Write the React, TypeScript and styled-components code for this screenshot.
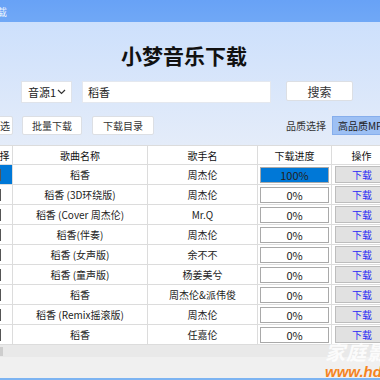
import { useEffect, useRef } from 'react';
import styled, { createGlobalStyle, css } from 'styled-components';

interface SongTypes {
  id: number;
  name: string;
  singer: string;
  progress: number;
}

const songs: SongTypes[] = [
  { id: 1, name: '稻香', singer: '周杰伦', progress: 100 },
  { id: 2, name: '稻香 (3D环绕版)', singer: '周杰伦', progress: 0 },
  { id: 3, name: '稻香 (Cover 周杰伦)', singer: 'Mr.Q', progress: 0 },
  { id: 4, name: '稻香(伴奏)', singer: '周杰伦', progress: 0 },
  { id: 5, name: '稻香 (女声版)', singer: '余不不', progress: 0 },
  { id: 6, name: '稻香 (童声版)', singer: '杨姜美兮', progress: 0 },
  { id: 7, name: '稻香', singer: '周杰伦&派伟俊', progress: 0 },
  { id: 8, name: '稻香 (Remix摇滚版)', singer: '周杰伦', progress: 0 },
  { id: 9, name: '稻香', singer: '任嘉伦', progress: 0 },
];

const GlobalStyle = createGlobalStyle`
  html, body {
    margin: 0;
    padding: 0;
  }
  body {
    width: 380px;
    height: 380px;
    overflow: hidden;
    background: #f0f0f0;
    color: #222;
    font-family: 'Noto Sans CJK SC', 'Noto Sans', sans-serif;
    font-size: 10px;
  }
`;

const Window = styled.div`
  position: relative;
  display: flex;
  flex-direction: column;
  width: 380px;
  height: 380px;
  overflow: hidden;
`;
const TitleBar = styled.div`
  display: flex;
  align-items: center;
  flex-shrink: 0;
  height: 22px;
  background: linear-gradient(#68a2f6, #70a8f6);
  color: #fff;
  font-size: 10px;
  overflow: hidden;
`;
const TitleBarText = styled.span`
  margin-left: -3px;
  opacity: 0.85;
`;
const Body = styled.div`
  display: flex;
  flex-direction: column;
  flex-shrink: 0;
  height: 123px;
  background: linear-gradient(#cde0fc, #e4ecf9);
  overflow: hidden;
`;
const Heading = styled.h1`
  margin: 21px 0 0;
  padding-right: 12px;
  height: 24px;
  line-height: 24px;
  text-align: center;
  font-size: 21px;
  font-weight: 700;
  color: #111;
`;
const SearchRow = styled.div`
  display: flex;
  align-items: flex-start;
  margin-top: 14px;
  padding-left: 21px;
  height: 22px;
`;
const SourceSelect = styled.div`
  display: flex;
  align-items: center;
  justify-content: space-between;
  box-sizing: border-box;
  width: 51px;
  height: 22px;
  padding: 0 5px 0 6px;
  background: #fff;
  border: 1px solid #dfe3ea;
  font-size: 11px;
  color: #222;
  white-space: nowrap;
`;
const SearchInput = styled.div`
  display: flex;
  align-items: center;
  box-sizing: border-box;
  width: 189px;
  height: 22px;
  margin-left: 10px;
  padding-left: 5px;
  background: #fff;
  border: 1px solid #e4e8ef;
  font-size: 11px;
  color: #222;
`;
const Button = styled.div<{ $width: number; $height?: number; $size?: number }>`
  display: flex;
  align-items: center;
  justify-content: center;
  flex-shrink: 0;
  box-sizing: border-box;
  width: ${({ $width }) => $width}px;
  height: ${({ $height }) => $height ?? 19}px;
  background: #fff;
  border: 1px solid #dcdfe4;
  border-radius: 2px;
  font-size: ${({ $size }) => $size ?? 10}px;
  color: #333;
  white-space: nowrap;
`;
const SearchButton = styled(Button)`
  margin-left: 15px;
`;
const ToolRow = styled.div`
  display: flex;
  align-items: center;
  gap: 9px;
  width: 402px;
  height: 19px;
  margin-top: 13px;
`;
const CroppedButton = styled(Button)`
  margin-left: -47px;
  justify-content: flex-end;
  padding-right: 2px;
`;
const DirButton = styled(Button)`
  margin-left: 1px;
`;
const QualityLabel = styled.span`
  margin-left: auto;
  font-size: 10px;
  color: #333;
`;
const QualitySelect = styled.div`
  display: flex;
  align-items: center;
  box-sizing: border-box;
  width: 70px;
  height: 19px;
  margin-left: -3px;
  padding-left: 5px;
  background: #9dc0f4;
  border: 1px solid #86aeec;
  font-size: 10px;
  color: #222;
  white-space: nowrap;
`;
const TableViewport = styled.div`
  flex-shrink: 0;
  height: 200px;
  background: #fff;
  overflow: hidden;
`;
const Grid = styled.div`
  display: grid;
  grid-template-columns: 26px 135px 110px 74px 60px;
  width: 405px;
`;
const Cell = styled.div<{ $header?: boolean; $selected?: boolean }>`
  display: flex;
  align-items: center;
  justify-content: center;
  box-sizing: border-box;
  height: 20px;
  border-right: 1px solid #dcdcdc;
  border-bottom: 1px solid #dcdcdc;
  font-size: 10px;
  color: #222;
  white-space: nowrap;
  overflow: hidden;
  ${({ $header }) =>
    $header &&
    css`
      border-top: 1px solid #dcdcdc;
      color: #111;
    `}
  ${({ $selected }) =>
    $selected &&
    css`
      background: #0078d7;
    `}
`;
const CheckCell = styled(Cell)`
  justify-content: flex-start;
  padding-left: 2px;
`;
const CheckBox = styled.div`
  box-sizing: border-box;
  width: 12px;
  height: 12px;
  background: #fff;
  border: 1px solid #555;
`;
const PadCell = styled(Cell)`
  padding: 0 2px 0 3px;
`;
const ProgressBox = styled.div`
  position: relative;
  box-sizing: border-box;
  width: 70px;
  height: 16px;
  margin-left: -1px;
  background: #fff;
  border: 1px solid #a9a9a9;
`;
const ProgressFill = styled.div`
  height: 100%;
  background: #0078d7;
`;
const ProgressText = styled.span`
  position: absolute;
  inset: 0;
  display: flex;
  align-items: center;
  justify-content: center;
  font-size: 11px;
  color: #222;
`;
const DownloadButton = styled.div`
  display: flex;
  align-items: center;
  justify-content: center;
  box-sizing: border-box;
  width: 54px;
  height: 17px;
  background: #e1e1e1;
  border: 1px solid #bdbdbd;
  font-size: 10px;
  color: #2b2bf5;
`;
const ScrollTrack = styled.div`
  flex-shrink: 0;
  height: 12px;
  background: #e9e9e9;
  display: flex;
  align-items: center;
`;
const ScrollThumb = styled.div`
  width: 3px;
  height: 9px;
  background: #cdcdcd;
`;
const StatusArea = styled.div`
  flex-shrink: 0;
  height: 21px;
  background: #f0f0f0;
`;
const BottomLine = styled.div`
  flex-shrink: 0;
  height: 2px;
  background: #7db4f2;
`;
const Watermark = styled.div`
  position: absolute;
  left: 325px;
  top: 342px;
  display: flex;
  flex-direction: column;
  line-height: 1;
  pointer-events: none;
`;
const MarkCn = styled.span`
  font-size: 20px;
  font-weight: 700;
  font-style: italic;
  letter-spacing: 1px;
  color: rgba(255, 255, 255, 0.85);
  white-space: nowrap;
`;
const MarkUrl = styled.span`
  margin-top: 2px;
  font-family: 'Liberation Sans', Arial, sans-serif;
  font-size: 15px;
  font-weight: 700;
  font-style: italic;
  color: #f5841f;
  white-space: nowrap;
`;

const Chevron = () => (
  <svg width="9" height="6" viewBox="0 0 9 6">
    <path d="M1 1l3.5 3.5L8 1" fill="none" stroke="#333" strokeWidth="1.2" />
  </svg>
);

const Row = ({ id, name, singer, progress }: SongTypes) => (
  <>
    <CheckCell $selected={id === 1}>
      <CheckBox />
    </CheckCell>
    <Cell>{name}</Cell>
    <Cell>{singer}</Cell>
    <PadCell>
      <ProgressBox>
        <ProgressFill style={{ width: `${progress}%` }} />
        <ProgressText>{progress}%</ProgressText>
      </ProgressBox>
    </PadCell>
    <PadCell>
      <DownloadButton>下载</DownloadButton>
    </PadCell>
  </>
);

const App = () => {
  const viewRef = useRef<HTMLDivElement>(null);

  // 表格横向滚动了一点
  useEffect(() => {
    if (viewRef.current) viewRef.current.scrollLeft = 13;
  }, []);

  return (
    <Window>
      <GlobalStyle />
      <TitleBar>
        <TitleBarText>载</TitleBarText>
      </TitleBar>
      <Body>
        <Heading>小梦音乐下载</Heading>
        <SearchRow>
          <SourceSelect>
            音源1
            <Chevron />
          </SourceSelect>
          <SearchInput>稻香</SearchInput>
          <SearchButton $width={67} $height={20} $size={12}>
            搜索
          </SearchButton>
        </SearchRow>
        <ToolRow>
          <CroppedButton $width={60}>全选</CroppedButton>
          <Button $width={60}>批量下载</Button>
          <DirButton $width={62}>下载目录</DirButton>
          <QualityLabel>品质选择</QualityLabel>
          <QualitySelect>高品质MP3</QualitySelect>
        </ToolRow>
      </Body>
      <TableViewport ref={viewRef}>
        <Grid>
          <Cell $header>选择</Cell>
          <Cell $header>歌曲名称</Cell>
          <Cell $header>歌手名</Cell>
          <Cell $header>下载进度</Cell>
          <Cell $header>操作</Cell>
          {songs.map((song) => (
            <Row key={song.id} {...song} />
          ))}
        </Grid>
      </TableViewport>
      <ScrollTrack>
        <ScrollThumb />
      </ScrollTrack>
      <StatusArea />
      <BottomLine />
      <Watermark>
        <MarkCn>家庭影院</MarkCn>
        <MarkUrl>www.hdav.com</MarkUrl>
      </Watermark>
    </Window>
  );
};

export default App;
